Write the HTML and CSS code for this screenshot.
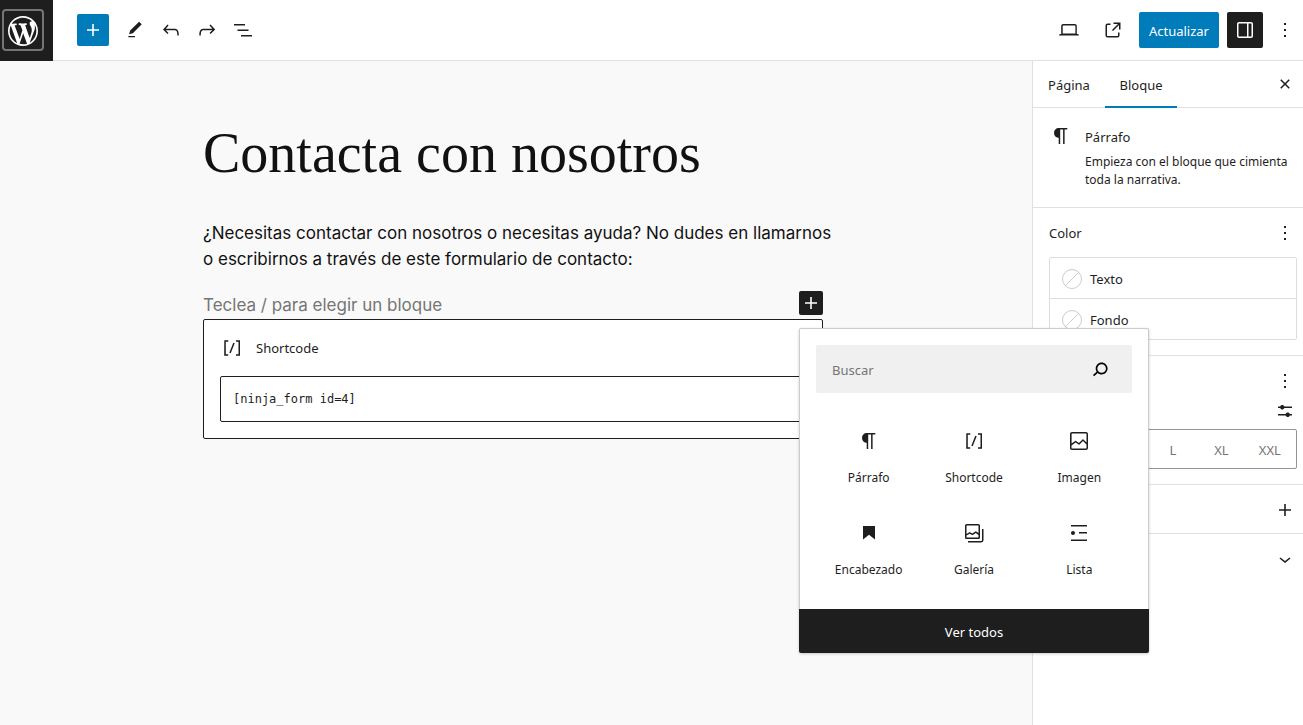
FILE: index.html
```html
<!DOCTYPE html>
<html lang="es">
<head>
<meta charset="utf-8">
<meta name="viewport" content="width=device-width, initial-scale=1">
<title>Editar página</title>
<link rel="stylesheet" href="styles.css">
</head>
<body>
<svg class="sprite" aria-hidden="true">
  <symbol id="i-plus" viewBox="0 0 24 24"><path d="M18 11.2h-5.2V6h-1.6v5.2H6v1.6h5.2V18h1.6v-5.2H18z"/></symbol>
  <symbol id="i-more" viewBox="0 0 24 24"><path d="M13 19h-2v-2h2v2zm0-6h-2v-2h2v2zm0-6h-2V5h2v2z"/></symbol>
  <symbol id="i-paragraph" viewBox="0 0 24 24"><path d="M18.3 4H9.9v-.1l-.9.2c-2.3.4-4 2.4-4 4.8s1.7 4.4 4 4.8l.7.1V20h1.5V5.5h2.9V20h1.5V5.5h2.7V4z"/></symbol>
  <symbol id="i-shortcode" viewBox="0 0 24 24"><path d="M16 4.2v1.5h2.5v12.5H16v1.5h4V4.2h-4zM4.2 19.8h4v-1.5H5.8V5.8h2.5V4.2h-4l-.1 15.6zm5.1-3.1l1.4.6 4-10-1.4-.6-4 10z"/></symbol>
</svg>

<header class="topbar">
  <a class="logo" href="#" aria-label="Ver páginas"><span class="logo-frame"><svg width="36" height="36" viewBox="-2 -2 24 24"><path d="M20 10c0-5.51-4.49-10-10-10C4.48 0 0 4.49 0 10c0 5.52 4.48 10 10 10 5.51 0 10-4.48 10-10zM7.78 15.37L4.37 6.22c.55-.02 1.17-.08 1.17-.08.5-.06.44-1.13-.06-1.11 0 0-1.45.11-2.37.11-.18 0-.37 0-.58-.01C4.12 2.69 6.87 1.11 10 1.11c2.33 0 4.45.87 6.05 2.34-.68-.11-1.65.39-1.65 1.58 0 .74.45 1.36.9 2.1.35.61.55 1.36.55 2.46 0 1.49-1.4 5-1.4 5l-3.03-8.37c.54-.02.82-.17.82-.17.5-.05.44-1.25-.06-1.22 0 0-1.44.12-2.38.12-.87 0-2.33-.12-2.33-.12-.5-.03-.56 1.2-.06 1.22l.92.08 1.26 3.41zM17.41 10c.24-.64.74-1.87.43-4.25.7 1.29 1.05 2.71 1.05 4.25 0 3.29-1.73 6.24-4.4 7.78.97-2.59 1.94-5.2 2.92-7.78zM6.1 18.09C3.12 16.65 1.11 13.53 1.11 10c0-1.3.23-2.48.72-3.59C3.25 10.3 4.67 14.2 6.1 18.09zm4.03-6.63l2.58 6.98c-.86.29-1.76.45-2.71.45-.79 0-1.57-.11-2.29-.33.81-2.38 1.62-4.74 2.42-7.1z"/></svg></span></a>
  <div class="tools">
    <button class="add" type="button" aria-label="Añadir bloque"><svg class="icon"><use href="#i-plus"/></svg></button>
    <button class="tool" type="button" aria-label="Herramientas"><svg width="20" height="20" viewBox="0 0 24 24"><path d="M20.1 5.1L16.9 2 6.2 12.7l-1.3 4.4 4.5-1.3L20.1 5.1zM4 20.8h8v-1.5H4v1.5z"/></svg></button>
    <button class="tool" type="button" aria-label="Deshacer"><svg class="icon" viewBox="0 0 24 24"><path d="M18.3 11.7c-.6-.6-1.4-.9-2.3-.9H6.7l2.9-3.3-1.1-1-4.5 5L8.5 16l1-1-2.7-2.7H16c.5 0 .9.2 1.3.5 1 1 1 3.4 1 4.5v.3h1.5v-.2c0-1.5 0-4.3-1.5-5.7z"/></svg></button>
    <button class="tool" type="button" aria-label="Rehacer"><svg class="icon" viewBox="0 0 24 24"><path d="M15.6 6.5l-1.1 1 2.9 3.3H8c-.9 0-1.7.3-2.3.9-1.4 1.5-1.4 4.2-1.4 5.6v.2h1.5v-.3c0-1.1 0-3.5 1-4.5.3-.3.7-.5 1.3-.5h9.2L14.5 15l1.1 1.1 4.6-4.6-4.6-5z"/></svg></button>
    <button class="tool" type="button" aria-label="Resumen del documento"><svg class="icon" viewBox="0 0 24 24"><path d="M3 6h11v1.5H3V6Zm3.5 5.5h11V13h-11v-1.5ZM21 17H10v1.5h11V17Z"/></svg></button>
  </div>
  <div class="actions">
    <button class="tool" type="button" aria-label="Ver"><svg class="icon" viewBox="0 0 24 24"><path d="M20.5 16h-.7V8c0-1.1-.9-2-2-2H6.2c-1.1 0-2 .9-2 2v8h-.7c-.8 0-1.5.7-1.5 1.5h20c0-.8-.7-1.5-1.5-1.5zM5.7 8c0-.3.2-.5.5-.5h11.6c.3 0 .6.2.6.5v7.6H5.7V8z"/></svg></button>
    <button class="tool" type="button" aria-label="Ver la página"><svg class="icon" viewBox="0 0 24 24"><path d="M19.5 4.5h-7V6h4.44l-5.97 5.97 1.06 1.06L18 7.06v4.44h1.5v-7Zm-13 1a2 2 0 0 0-2 2v10a2 2 0 0 0 2 2h10a2 2 0 0 0 2-2v-3H17v3a.5.5 0 0 1-.5.5h-10a.5.5 0 0 1-.5-.5v-10a.5.5 0 0 1 .5-.5h3V5.5h-3Z"/></svg></button>
    <button class="update" type="button">Actualizar</button>
    <button class="tool pressed" type="button" aria-label="Ajustes"><svg class="icon" viewBox="0 0 24 24"><path d="M18 4H6c-1.1 0-2 .9-2 2v12c0 1.1.9 2 2 2h12c1.1 0 2-.9 2-2V6c0-1.1-.9-2-2-2zm-4 14.5H6c-.3 0-.5-.2-.5-.5V6c0-.3.2-.5.5-.5h8v13zm4.5-.5c0 .3-.2.5-.5.5h-2.5v-13H18c.3 0 .5.2.5.5v12z"/></svg></button>
    <button class="tool" type="button" aria-label="Opciones"><svg class="icon"><use href="#i-more"/></svg></button>
  </div>
</header>

<div class="workspace">
  <main class="canvas">
    <article class="content">
      <h1 class="title">Contacta con nosotros</h1>
      <p class="text">¿Necesitas contactar con nosotros o necesitas ayuda? No dudes en llamarnos<br>o escribirnos a través de este formulario de contacto:</p>
      <div class="empty-block">
        <p class="prompt">Teclea / para elegir un bloque</p>
        <div class="inserter">
          <button class="inserter-toggle" type="button" aria-label="Añadir bloque"><svg class="icon"><use href="#i-plus"/></svg></button>
          <section class="popover" aria-label="Insertador">
            <div class="search">
              <input class="search-input" type="text" placeholder="Buscar" aria-label="Buscar">
              <svg class="search-icon" viewBox="0 0 24 24"><path d="M13.5 6C10.5 6 8 8.5 8 11.5c0 1.1.3 2.1.9 3l-3.4 3 1 1.1 3.4-2.9c1 .9 2.2 1.4 3.6 1.4 3 0 5.5-2.5 5.5-5.5C19 8.5 16.5 6 13.5 6zm0 9.5c-2.2 0-4-1.8-4-4s1.8-4 4-4 4 1.8 4 4-1.8 4-4 4z"/></svg>
            </div>
            <div class="blocks">
              <button class="block" type="button"><svg class="icon"><use href="#i-paragraph"/></svg><span>Párrafo</span></button>
              <button class="block" type="button"><svg class="icon"><use href="#i-shortcode"/></svg><span>Shortcode</span></button>
              <button class="block" type="button"><svg class="icon" viewBox="0 0 24 24"><path d="M19 3H5c-1.1 0-2 .9-2 2v14c0 1.1.9 2 2 2h14c1.1 0 2-.9 2-2V5c0-1.1-.9-2-2-2zM5 4.5h14c.3 0 .5.2.5.5v8.4l-3-2.9c-.3-.3-.8-.3-1 0L11.9 14 9 12c-.3-.2-.6-.2-.8 0l-3.6 2.6V5c-.1-.3.1-.5.4-.5zm14 15H5c-.3 0-.5-.2-.5-.5v-2.4l4.1-3 3 1.9c.3.2.7.2.9-.1L16 12l3.5 3.4V19c0 .3-.2.5-.5.5z"/></svg><span>Imagen</span></button>
              <button class="block" type="button"><svg class="icon" viewBox="0 0 24 24"><path d="M6 5V18.6L12 13.85L18 18.6V5H6Z"/></svg><span>Encabezado</span></button>
              <button class="block" type="button"><svg class="icon" viewBox="0 0 24 24"><path fill-rule="evenodd" d="M16.375 4.5H4.625a.125.125 0 0 0-.125.125v8.254l2.859-1.54a.75.75 0 0 1 .68-.016l2.384 1.142 2.89-2.074a.75.75 0 0 1 .874 0l2.313 1.66V4.625a.125.125 0 0 0-.125-.125Zm.125 9.398-2.75-1.975-2.813 2.02a.75.75 0 0 1-.76.067l-2.444-1.17L4.5 14.583v1.792c0 .069.056.125.125.125h11.75a.125.125 0 0 0 .125-.125v-2.477ZM4.625 3C3.728 3 3 3.728 3 4.625v11.75C3 17.273 3.728 18 4.625 18h11.75c.898 0 1.625-.727 1.625-1.625V4.625C18 3.728 17.273 3 16.375 3H4.625ZM20 8v11c0 .69-.31 1-.999 1H6v1.5h13.001c1.52 0 2.499-.982 2.499-2.5V8H20Z"/></svg><span>Galería</span></button>
              <button class="block" type="button"><svg class="icon" viewBox="0 0 24 24"><path d="M4 4v1.5h16V4H4zm8 8.5h8V11h-8v1.5zM4 20h16v-1.5H4V20zm4-8c0-1.1-.9-2-2-2s-2 .9-2 2 .9 2 2 2 2-.9 2-2z"/></svg><span>Lista</span></button>
            </div>
            <button class="see-all" type="button">Ver todos</button>
          </section>
        </div>
      </div>
      <div class="shortcode">
        <label class="shortcode-label" for="code"><svg class="icon"><use href="#i-shortcode"/></svg>Shortcode</label>
        <textarea class="shortcode-input" id="code" rows="1" spellcheck="false">[ninja_form id=4]</textarea>
      </div>
    </article>
  </main>

  <aside class="sidebar">
    <div class="tabs">
      <button class="tab" type="button">Página</button>
      <button class="tab active" type="button">Bloque</button>
      <button class="small-button close" type="button" aria-label="Cerrar ajustes"><svg class="icon" viewBox="0 0 24 24"><path d="M12 13.06l3.712 3.713 1.061-1.06L13.061 12l3.712-3.712-1.06-1.06L12 10.938 8.288 7.227l-1.061 1.06L10.939 12l-3.712 3.712 1.06 1.061L12 13.061z"/></svg></button>
    </div>
    <section class="panel card">
      <svg class="icon"><use href="#i-paragraph"/></svg>
      <div>
        <h2 class="card-title">Párrafo</h2>
        <p class="card-text">Empieza con el bloque que cimienta toda la narrativa.</p>
      </div>
    </section>
    <section class="panel color">
      <div class="panel-head">
        <h2 class="panel-title">Color</h2>
        <button class="small-button" type="button" aria-label="Opciones de color"><svg class="icon"><use href="#i-more"/></svg></button>
      </div>
      <div class="swatches">
        <button class="swatch" type="button"><span class="dot"></span>Texto</button>
        <button class="swatch" type="button"><span class="dot"></span>Fondo</button>
      </div>
    </section>
    <section class="panel typography" aria-label="Tipografía">
      <button class="small-button" type="button" aria-label="Opciones de tipografía"><svg class="icon"><use href="#i-more"/></svg></button>
      <button class="small-button" type="button" aria-label="Tamaño personalizado"><svg class="icon" viewBox="0 0 24 24"><path d="m19 7.5h-7.628c-.3089-.87389-1.1423-1.5-2.122-1.5-.97966 0-1.81309.62611-2.12197 1.5h-2.12803v1.5h2.12803c.30888.87389 1.14231 1.5 2.12197 1.5.9797 0 1.8131-.62611 2.122-1.5h7.628z"/><path d="m19 15h-2.128c-.3089-.8739-1.1423-1.5-2.122-1.5s-1.8131.6261-2.122 1.5h-7.628v1.5h7.628c.3089.8739 1.1423 1.5 2.122 1.5s1.8131-.6261 2.122-1.5h2.128z"/></svg></button>
      <div class="sizes">
        <button class="size" type="button" aria-label="Pequeño"></button>
        <button class="size" type="button" aria-label="Mediano"></button>
        <button class="size" type="button">L</button>
        <button class="size" type="button">XL</button>
        <button class="size" type="button">XXL</button>
      </div>
    </section>
    <section class="panel row" aria-label="Dimensiones">
      <button class="small-button" type="button" aria-label="Opciones de dimensiones"><svg class="icon"><use href="#i-plus"/></svg></button>
    </section>
    <section class="row" aria-label="Avanzado">
      <button class="small-button" type="button" aria-label="Mostrar avanzado"><svg class="icon" viewBox="0 0 24 24"><path d="M17.5 11.6L12 16l-5.5-4.4.9-1.2L12 14l4.5-3.6 1 1.2z"/></svg></button>
    </section>
  </aside>
</div>
</body>
</html>
```
FILE: styles.css
```css
* {
  box-sizing: border-box;
}

body {
  display: flex;
  flex-direction: column;
  min-height: 100vh;
  margin: 0;
  background: #fff;
  color: #1e1e1e;
  font: 13px/18px "Noto Sans", sans-serif;
}

h1,
h2,
p {
  margin: 0;
  font-weight: 400;
}

button {
  display: flex;
  align-items: center;
  justify-content: center;
  padding: 0;
  border: 0;
  background: none;
  color: inherit;
  font: inherit;
  cursor: pointer;
}

svg {
  flex: none;
  fill: currentColor;
}

.sprite {
  position: absolute;
  width: 0;
  height: 0;
}

.icon {
  width: 24px;
  height: 24px;
}

/* Top bar */

.topbar {
  display: flex;
  align-items: center;
  height: 61px;
  border-bottom: 1px solid #e0e0e0;
}

.logo {
  display: flex;
  align-items: center;
  width: 53px;
  height: 61px;
  padding-left: 2px;
  background: #1e1e1e;
  color: #fff;
}

.logo-frame {
  display: flex;
  align-items: center;
  justify-content: center;
  width: 42px;
  height: 42px;
  padding-top: 2px;
  border: 2px solid #757575;
  border-radius: 4px;
}

.tools {
  display: flex;
  align-items: center;
  padding-left: 24px;
}

.add {
  width: 32px;
  height: 32px;
  margin-right: 8px;
  border-radius: 2px;
  background: #007cba;
  color: #fff;
}

.tool {
  width: 36px;
  height: 36px;
  border-radius: 2px;
}

.actions {
  display: flex;
  align-items: center;
  gap: 8px;
  margin-left: auto;
}

.actions .tool:last-child {
  margin-left: -4px;
}

.update {
  height: 36px;
  padding: 2px 10px 0;
  border-radius: 2px;
  background: #007cba;
  color: #fff;
}

.pressed {
  background: #1e1e1e;
  color: #fff;
}

/* Editor canvas */

.workspace {
  display: flex;
  flex: 1;
}

.canvas {
  flex: 1;
  padding: 60px 6px 0 0;
  background: #f9f9f9;
}

.content {
  max-width: 620px;
  margin: 0 auto;
}

.title {
  color: #111;
  font: 56px/64px "Liberation Serif", serif;
}

.text {
  margin-top: 35px;
  color: #111;
  font: 17px/26px Inter, sans-serif;
  white-space: nowrap;
}

.empty-block {
  display: flex;
  align-items: center;
  justify-content: space-between;
  margin: 16px 0 1px;
}

.prompt {
  padding-top: 4px;
  color: #757575;
  font: 17px/26px Inter, sans-serif;
}

.inserter {
  position: relative;
}

.inserter-toggle {
  width: 24px;
  height: 24px;
  border-radius: 2px;
  background: #1e1e1e;
  color: #fff;
}

.shortcode {
  padding: 16px;
  border: 1px solid #1e1e1e;
  border-radius: 2px;
  background: #fff;
}

.shortcode-label {
  display: flex;
  align-items: center;
  gap: 12px;
  height: 24px;
}

.shortcode-input {
  display: block;
  width: 100%;
  height: 46px;
  margin-top: 16px;
  padding: 13px 12px;
  border: 1px solid #1e1e1e;
  border-radius: 2px;
  color: #1e1e1e;
  font: 12px/18px "DejaVu Sans Mono", monospace;
  resize: none;
}

/* Quick inserter */

.popover {
  position: absolute;
  z-index: 2;
  top: 37px;
  left: 0;
  width: 350px;
  border: 1px solid #ccc;
  border-bottom: 0;
  border-radius: 2px;
  background: #fff;
  box-shadow: 0 1px 3px rgba(0, 0, 0, 0.2);
}

.search {
  display: flex;
  align-items: center;
  height: 48px;
  margin: 16px;
  padding: 0 19px 0 16px;
  border-radius: 2px;
  background: #f0f0f0;
}

.search-input {
  flex: 1;
  min-width: 0;
  padding: 2px 0 0;
  border: 0;
  outline: 0;
  background: none;
  color: #1e1e1e;
  font: inherit;
}

.search-input::placeholder {
  color: #757575;
  opacity: 1;
}

.search-icon {
  width: 26px;
  height: 26px;
  color: #000;
}

.blocks {
  display: grid;
  grid-template-columns: repeat(3, 1fr);
  padding: 3px 16px 8px;
}

.block {
  flex-direction: column;
  gap: 16px;
  height: 92px;
  font-size: 12px;
}

.see-all {
  width: 350px;
  height: 44px;
  margin: 5px -1px 0;
  padding-top: 2px;
  border-radius: 0 0 2px 2px;
  background: #1e1e1e;
  color: #fff;
}

/* Settings sidebar */

.sidebar {
  flex: none;
  width: 271px;
  border-left: 1px solid #e0e0e0;
}

.tabs {
  display: flex;
  height: 47px;
  border-bottom: 1px solid #e0e0e0;
}

.tab {
  width: 72px;
  height: 47px;
  padding-top: 1px;
}

.active {
  box-shadow: inset 0 -2px 0 #007cba;
}

.small-button {
  width: 24px;
  height: 24px;
}

.close {
  margin: 11px 6px 0 auto;
}

.panel {
  border-bottom: 1px solid #e0e0e0;
}

.card {
  display: flex;
  gap: 12px;
  padding: 16px 6px 18px 16px;
}

.card-title {
  padding-top: 4px;
  font-size: 13px;
}

.card-text {
  margin-top: 7px;
  font-size: 12px;
}

.color {
  padding: 13px 6px 15px 16px;
}

.panel-head {
  display: flex;
  align-items: center;
  justify-content: space-between;
}

.panel-title {
  font-size: 13px;
}

.swatches {
  margin-top: 12px;
  border: 1px solid #ddd;
  border-radius: 2px;
}

.swatch {
  justify-content: flex-start;
  gap: 8px;
  width: 100%;
  height: 40px;
  padding: 1px 0 0 12px;
}

.swatch + .swatch {
  height: 41px;
  border-top: 1px solid #ddd;
}

.dot {
  width: 20px;
  height: 20px;
  border: 1px solid #ccc;
  border-radius: 50%;
  background: linear-gradient(-45deg, transparent 48%, #ccc 48%, #ccc 52%, transparent 52%);
}

.typography {
  display: flex;
  flex-direction: column;
  align-items: flex-end;
  gap: 6px;
  padding: 13px 6px 15px 16px;
}

.sizes {
  display: grid;
  grid-template-columns: repeat(5, 1fr);
  width: 100%;
  height: 40px;
  padding: 2px 2px 0;
  border: 1px solid #949494;
  border-radius: 2px;
  color: #757575;
}

.row {
  display: flex;
  justify-content: flex-end;
  padding: 13px 6px 11px;
}
```
